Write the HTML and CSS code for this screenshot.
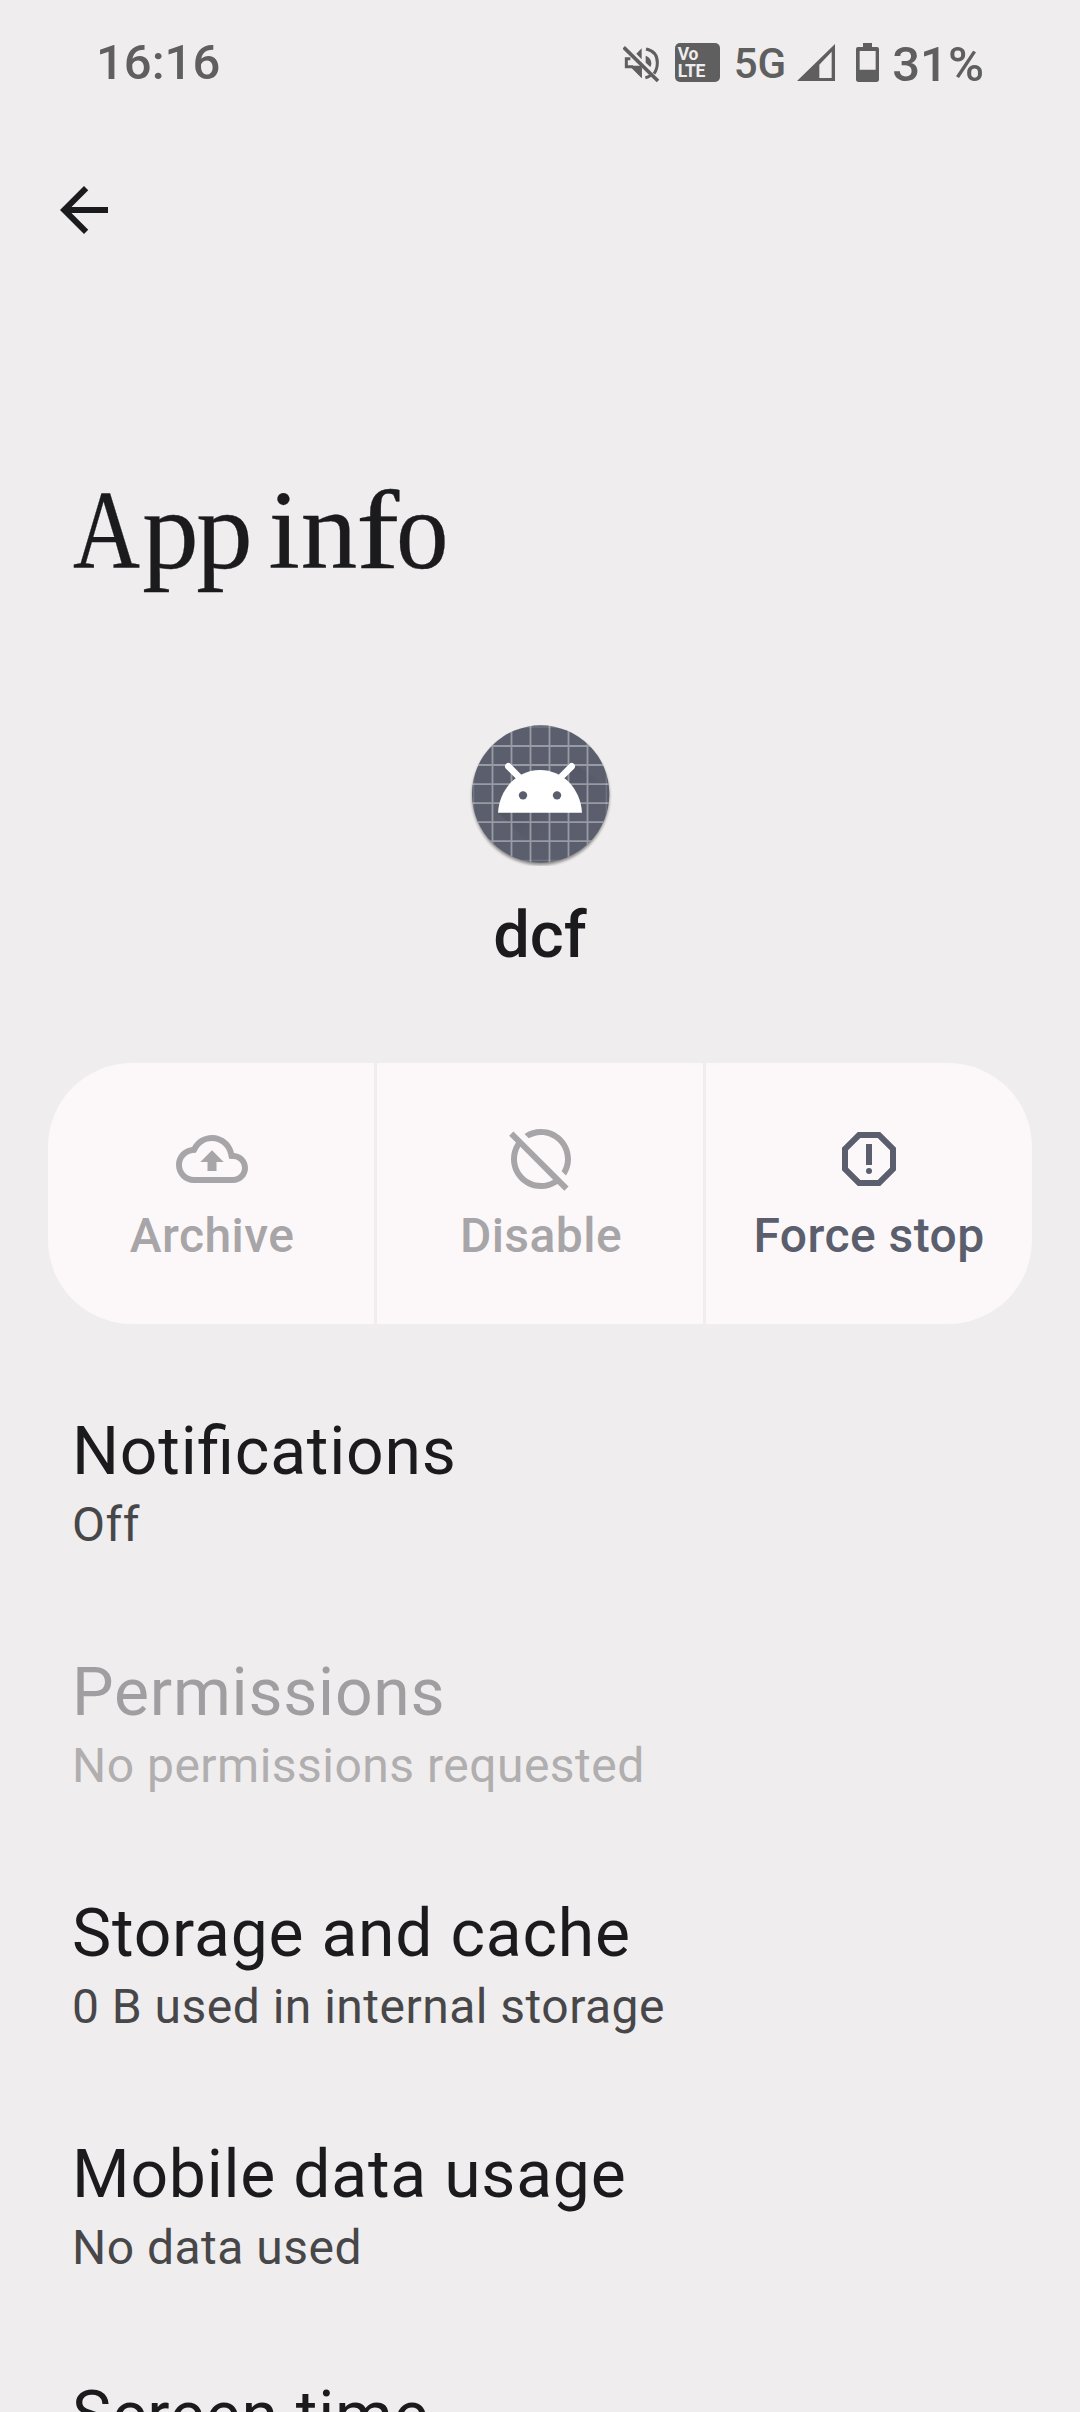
FILE: index.html
```html
<!DOCTYPE html>
<html lang="en">
<head>
<meta charset="utf-8">
<title>App info</title>
<link rel="stylesheet" href="styles.css">
</head>
<body>
<div class="status">
  <span class="status-time">16:16</span>
  <svg class="mute" viewBox="24 30 111 114" fill="none" stroke="#5f5f5f" stroke-width="9">
    <path d="M93 42C117 47 127 64 127 83C127 95 124 106 117 116M91 128C97 127 102 125 106 122"/>
    <path d="M46 71H34V95H52L76 119V98" />
    <path fill="#5f5f5f" stroke="none" d="M64 56L80 40V73ZM56 92H80V128L52 98ZM92 62C103 66 109 74 109 84C109 89 108 92 106 96L92 83Z"/>
    <path stroke-width="11" d="M26 37L129 138"/>
  </svg>
  <span class="volte"><b>Vo</b><b>LTE</b></span>
  <span class="network">5G</span>
  <svg class="signal" viewBox="51 27 114 111"><path fill="#5f5f5f" fill-rule="evenodd" d="M51 138L165 27V138ZM155 50L118 89V129H155Z"/></svg>
  <svg class="battery" viewBox="228 24 69 117"><path fill="#5f5f5f" fill-rule="evenodd" d="M249 24H276V36H291Q297 36 297 42V133Q297 141 289 141H236Q228 141 228 133V42Q228 36 234 36H249ZM239 48V104H287V48Z"/></svg>
  <span class="percent">31%</span>
</div>

<header class="header">
  <svg class="back" viewBox="0 0 24 24"><path fill="#1b1b1d" d="M20 11H7.83l5.59-5.59L12 4l-8 8 8 8 1.41-1.41L7.83 13H20z"/></svg>
  <h1 class="title"><span class="cap">A</span>pp <span class="stem">i</span><span class="arch">n</span><span class="hook">f</span><span class="bowl">o</span></h1>
</header>

<section class="app">
  <svg class="app-icon" viewBox="84 66 432 432">
    <defs>
      <clipPath id="disc"><circle cx="302" cy="282" r="206"/></clipPath>
      <linearGradient id="cast" x1="0" y1="0" x2="1" y2="1"><stop offset="0" stop-color="#4a4e58"/><stop offset=".7" stop-color="#5a5e6d" stop-opacity="0"/></linearGradient>
      <filter id="soft" x="-10%" y="-10%" width="120%" height="120%"><feGaussianBlur stdDeviation="4"/></filter>
    </defs>
    <circle cx="302" cy="289" r="206" fill="#000" opacity=".42" filter="url(#soft)"/>
    <circle cx="302" cy="282" r="206" fill="#5a5e6d"/>
    <g clip-path="url(#disc)">
      <path fill="url(#cast)" d="M175 338L340 503H560V300L404 192L380 240L426 338Z"/>
      <path stroke="#fff" stroke-opacity=".38" stroke-width="5.500" d="M157.500 70V500M214.500 70V500M271.500 70V500M328.500 70V500M385.500 70V500M442.500 70V500M90 138H510M90 195H510M90 252.500H510M90 309.500H510M90 366.500H510M90 423.500H510"/>
      <path stroke="#fff" stroke-opacity=".14" stroke-width="4" d="M101 70V500M499 70V500M90 81H510M90 481H510"/>
    </g>
    <path stroke="#fff" stroke-width="20" stroke-linecap="round" d="M205 199L240 234M395 199L360 234"/>
    <path fill="#fff" d="M174 338C178 266 232 210 300 210S422 266 426 338Z"/>
    <circle cx="249" cy="286" r="12.500" fill="#5a5e6d"/><circle cx="351" cy="286" r="12.500" fill="#5a5e6d"/>
  </svg>
  <div class="app-name">dcf</div>
</section>

<section class="actions">
  <div class="action off">
    <svg viewBox="0 0 24 24"><path d="M19.350 10.040C18.670 6.590 15.640 4 12 4 9.110 4 6.600 5.640 5.350 8.040 2.340 8.360 0 10.910 0 14c0 3.310 2.690 6 6 6h13c2.760 0 5-2.240 5-5 0-2.640-2.050-4.780-4.650-4.960zM19 18H6c-2.210 0-4-1.790-4-4 0-2.050 1.530-3.760 3.560-3.970l1.070-.11.5-.95C8.080 7.140 9.940 6 12 6c2.620 0 4.880 1.860 5.390 4.430l.3 1.500 1.530.11c1.560.1 2.780 1.410 2.780 2.960 0 1.650-1.350 3-3 3zM8.100 13h2.400v3h3v-3h2.400L12 9.100z"/></svg>
    <span>Archive</span>
  </div>
  <div class="action off">
    <svg viewBox="0 0 24 24"><path d="M1.390 4.220l2.270 2.270C2.610 8.070 2 9.960 2 12c0 5.520 4.480 10 10 10 2.040 0 3.930-.61 5.510-1.660l2.270 2.270 1.410-1.410L2.810 2.810 1.390 4.220zM12 20c-4.410 0-8-3.590-8-8 0-1.480.41-2.860 1.120-4.060l10.930 10.940C14.860 19.590 13.480 20 12 20zM7.940 5.120L6.490 3.660C8.070 2.610 9.960 2 12 2c5.520 0 10 4.480 10 10 0 2.040-.61 3.930-1.660 5.510l-1.460-1.460C19.590 14.860 20 13.480 20 12c0-4.410-3.590-8-8-8-1.480 0-2.860.41-4.060 1.120z"/></svg>
    <span>Disable</span>
  </div>
  <div class="action">
    <svg viewBox="0 0 24 24"><path d="M15.730 3H8.270L3 8.270v7.460L8.270 21h7.460L21 15.730V8.270L15.730 3zM19 14.900L14.900 19H9.100L5 14.900V9.100L9.100 5h5.800L19 9.100v5.800zM11 7h2v7h-2z"/><circle cx="12" cy="16" r="1"/></svg>
    <span>Force stop</span>
  </div>
</section>

<main class="settings">
  <div class="row"><div class="row-title">Notifications</div><div class="row-note">Off</div></div>
  <div class="row disabled"><div class="row-title">Permissions</div><div class="row-note">No permissions requested</div></div>
  <div class="row"><div class="row-title">Storage and cache</div><div class="row-note">0 B used in internal storage</div></div>
  <div class="row"><div class="row-title">Mobile data usage</div><div class="row-note">No data used</div></div>
  <div class="row"><div class="row-title">Screen time</div></div>
</main>
</body>
</html>
```
FILE: styles.css
```css
* { box-sizing: border-box; }

html { background: #efedee; }

body {
  margin: 0;
  width: 1080px;
  height: 2412px;
  overflow: hidden;
  background: #efedee;
  color: #1b1b1d;
  font-family: Roboto, "Liberation Sans", sans-serif;
}

svg { display: block; flex: none; }

/* Status bar */
.status {
  display: flex;
  align-items: flex-start;
  height: 124px;
  padding: 0 96px;
  color: #5f5f5f;
  font-weight: 500;
}
.status-time { margin: 34px auto 0 0; font-size: 49px; line-height: 58px; }
.mute { width: 37px; height: 38px; margin-top: 45px; }
.volte {
  display: flex;
  flex-direction: column;
  width: 45px;
  height: 39px;
  margin: 43px 0 0 15px;
  padding: 3px 0 0 3px;
  border-radius: 5px;
  background: #5f5f5f;
  color: #efedee;
  font-size: 17.5px;
  line-height: 17px;
  letter-spacing: -.3px;
}
.volte b { font-weight: 700; }
.network { margin: 39px 0 0 14px; font-size: 42px; line-height: 50px; }
.signal { width: 38px; height: 37px; margin: 44px 0 0 11px; }
.battery { width: 23px; height: 39px; margin: 43px 0 0 21px; }
.percent { margin: 36px 0 0 13px; font-size: 49px; line-height: 58px; }

/* Collapsing toolbar */
.header { height: 598px; padding-top: 50px; }
.back { width: 72px; height: 72px; margin-left: 48px; }
.title {
  margin: 219px 0 0 73px;
  font: 400 113px/130px "Liberation Serif", serif;
  letter-spacing: -2.5px;
  word-spacing: -7.5px;
  white-space: nowrap;
  -webkit-text-stroke: .3px #1b1b1d;
}
.cap, .hook, .bowl { display: inline-block; transform-origin: left; letter-spacing: 0; }
.cap { transform: scaleX(.82); margin-right: -12.3px; }
.stem { letter-spacing: .8px; }
.arch { letter-spacing: -1.4px; }
.hook { transform: scaleX(1.15); margin-right: 2px; }
.bowl { transform: scaleX(.93); }

/* App identity */
.app { display: flex; flex-direction: column; align-items: center; height: 341px; }
.app-icon { width: 144px; height: 144px; }
.app-name { margin-top: 30px; font-size: 65px; font-weight: 500; line-height: 78px; }

/* Action buttons */
.actions {
  display: grid;
  grid-template-columns: repeat(3, 1fr);
  gap: 3px;
  height: 261px;
  margin: 0 48px 40px;
  border-radius: 84px;
  overflow: hidden;
}
.action {
  display: flex;
  flex-direction: column;
  align-items: center;
  gap: 13px;
  padding-top: 60px;
  background: #fcf8f9;
  color: #5a5e6d;
  fill: currentColor;
  font-size: 48px;
  font-weight: 500;
  line-height: 56px;
  letter-spacing: .45px;
  white-space: nowrap;
}
.action svg { width: 72px; height: 72px; }
.off { padding-left: 2px; color: #a7a5a7; }

/* Preference rows */
.settings { height: 1048px; overflow: hidden; }
.row { height: 241px; padding: 49px 72px 0; }
.row-title {
  font-size: 66px;
  line-height: 78px;
  letter-spacing: .78px;
  font-feature-settings: "liga" 1;
}
.row-note { margin-top: 6px; color: #474749; font-size: 48px; line-height: 56px; letter-spacing: .48px; }
.disabled .row-title { color: #a09ea0; }
.disabled .row-note { color: #b0aeaf; }
```
